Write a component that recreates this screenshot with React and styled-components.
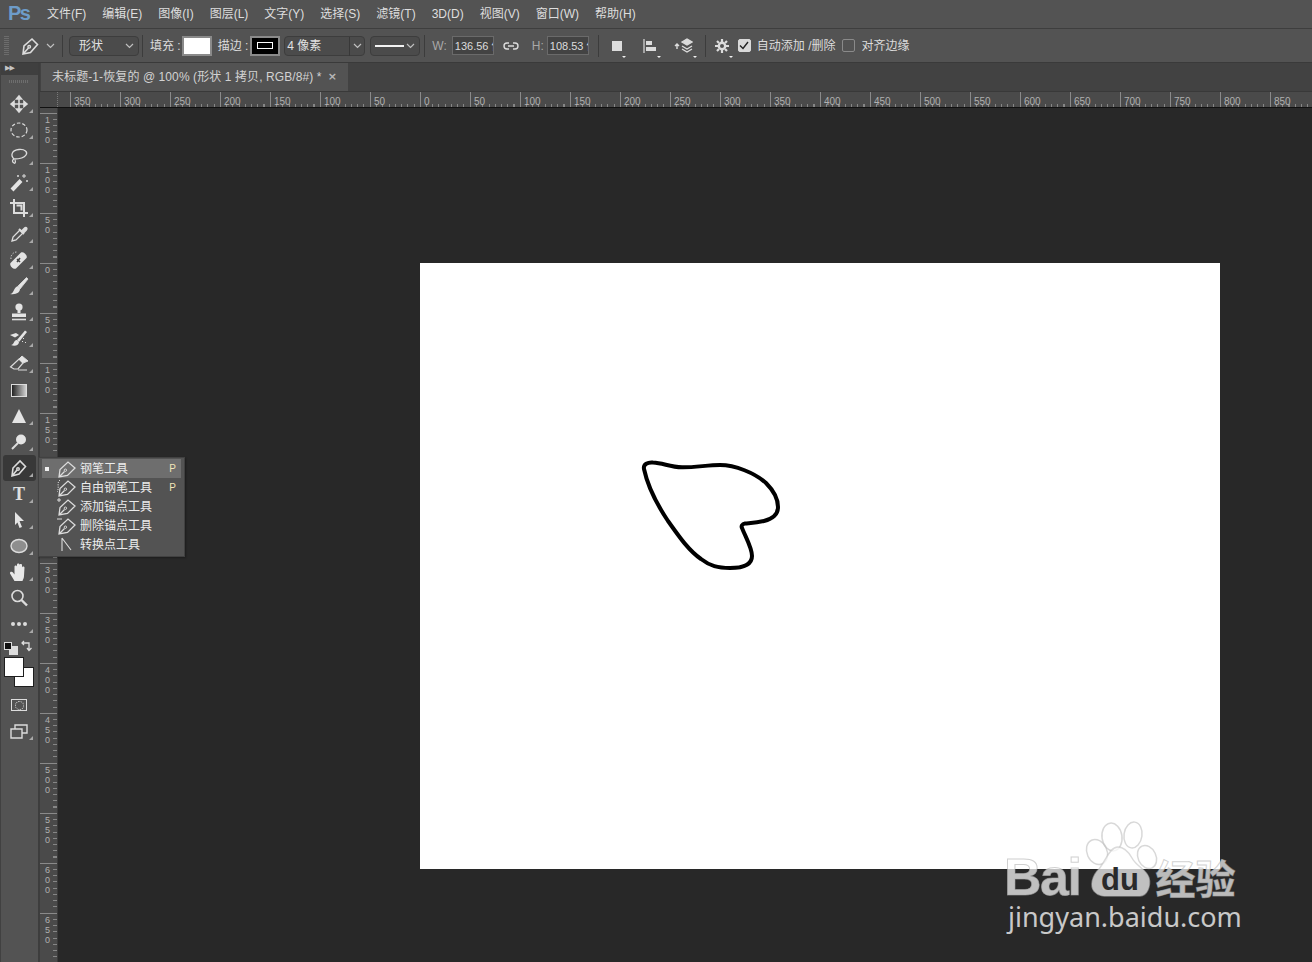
import React from 'react';
import styled, { createGlobalStyle } from 'styled-components';

const GlobalStyle = createGlobalStyle`
  html, body { margin: 0; padding: 0; background: #282828; }
  * { box-sizing: border-box; }
`;

const CJK = `"Liberation Sans", "Noto Sans CJK SC", sans-serif`;

const Shell = styled.div`
  position: relative;
  width: 1312px;
  height: 962px;
  overflow: hidden;
  display: flex;
  flex-direction: column;
  background: #535353;
  color: #e2e2e2;
  font: 12px/16px ${CJK};
`;

/* menu bar */
const MenuBar = styled.div`
  height: 29px;
  flex: none;
  display: flex;
  align-items: center;
  padding-left: 8px;
  gap: 16px;
  background: #535353;
  border-bottom: 1px solid #3e3e3e;
`;
const Logo = styled.div`
  width: 23px;
  margin-top: -3px;
  color: #6d9cc9;
  font: bold 20px/22px "Liberation Sans", sans-serif;
  letter-spacing: -1.5px;
`;
const MenuItem = styled.span`
  color: #dedede;
  white-space: nowrap;
`;

/* options bar */
const OptionsBar = styled.div`
  height: 34px;
  flex: none;
  display: flex;
  align-items: center;
  background: #535353;
  border-bottom: 1px solid #3a3a3a;
`;
const Grip = styled.div`
  width: 5px;
  height: 20px;
  margin: 0 12px 0 4px;
  background: repeating-linear-gradient(180deg, #6c6c6c 0 1px, transparent 1px 2px);
`;
const Divider = styled.div`
  width: 1px;
  height: 22px;
  flex: none;
  margin: ${p => p.$margin || '0 6px'};
  background: #3c3c3c;
`;
const Caret = styled.svg`
  width: 9px;
  height: 6px;
  flex: none;
  fill: none;
  stroke: #c0c0c0;
  stroke-width: 1.2;
`;
const Select = styled.div`
  width: ${p => p.$width}px;
  height: 20px;
  flex: none;
  display: flex;
  align-items: center;
  justify-content: space-between;
  padding: 1px 4px 0 9px;
  background: #4b4b4b;
  border: 1px solid #3d3d3d;
  border-radius: 4px;
`;
const OptLabel = styled.span`
  flex: none;
  white-space: nowrap;
  padding-top: 1px;
  color: ${p => p.$dim ? '#a8a8a8' : '#dcdcdc'};
  margin: ${p => p.$margin || '0'};
`;
const Swatch = styled.div`
  width: 30px;
  height: 20px;
  flex: none;
  display: flex;
  align-items: center;
  justify-content: center;
  border: 2px solid #8a8a8a;
  background: ${p => p.$bg};
`;
const StrokeBox = styled.div`
  width: 16px;
  height: 7px;
  border: 1.5px solid #fff;
`;
const SizeField = styled.div`
  width: 81px;
  height: 20px;
  flex: none;
  display: grid;
  grid-template-columns: 65px 1fr;
  align-items: center;
  margin-left: 4px;
  background: #4b4b4b;
  border: 1px solid #3d3d3d;
  border-radius: 4px;
`;
const SizeValue = styled.span`
  padding-left: 2px;
  height: 100%;
  line-height: 19px;
  border-right: 1px solid #383838;
`;
const CaretCell = styled.span`
  display: flex;
  justify-content: center;
`;
const LineSelect = styled(Select)`
  margin-left: 5px;
  padding: 0 4px;
`;
const LineSample = styled.span`
  width: 29px;
  height: 2px;
  background: #f2f2f2;
`;
const NumField = styled.div`
  width: 42px;
  height: 19px;
  flex: none;
  padding-left: 2px;
  overflow: hidden;
  white-space: nowrap;
  line-height: 18px;
  font-size: 11px;
  color: #dcdcdc;
  background: #434343;
  border: 1px solid #6a6a6a;
`;
const OptIcon = styled.span`
  position: relative;
  width: ${p => p.$width}px;
  height: 20px;
  flex: none;
  display: flex;
  align-items: center;
  margin: ${p => p.$margin || '0'};
  &::after {
    content: "";
    position: absolute;
    right: -4px;
    bottom: -4px;
    border: 2.5px solid transparent;
    border-top-color: #f0f0f0;
    display: ${p => p.$menu ? 'block' : 'none'};
  }
`;
const FillSquare = styled.span`
  width: 10px;
  height: 10px;
  background: #dcdcdc;
`;
const Check = styled.span`
  width: 13px;
  height: 13px;
  flex: none;
  display: flex;
  align-items: center;
  justify-content: center;
  border-radius: 2px;
  background: ${p => p.$on ? '#d9d9d9' : 'transparent'};
  border: 1px solid ${p => p.$on ? '#d9d9d9' : '#8a8a8a'};
  margin: ${p => p.$margin || '0'};
`;

/* workspace */
const Workspace = styled.div`
  flex: 1;
  min-height: 0;
  display: flex;
`;
const Toolbar = styled.div`
  width: 40px;
  flex: none;
  display: flex;
  flex-direction: column;
  background: #535353;
  border-right: 2px solid #3d3d3d;
  border-left: 1px solid #414141;
`;
const CollapseStrip = styled.div`
  height: 12px;
  padding-left: 4px;
  color: #c4c4c4;
  font: 7px/10px "DejaVu Sans", sans-serif;
  letter-spacing: -1px;
  background: #3f3f3f;
`;
const ToolGrip = styled.div`
  height: 16px;
  display: flex;
  justify-content: center;
  padding: 5px 2px 0 0;
  &::before {
    content: "";
    width: 20px;
    height: 3px;
    background: repeating-linear-gradient(90deg, #6e6e6e 0 1px, transparent 1px 2px);
  }
`;
const Tool = styled.div`
  position: relative;
  width: 33px;
  height: 26px;
  margin-left: 2px;
  padding-right: 1px;
  flex: none;
  display: flex;
  align-items: center;
  justify-content: center;
  border-radius: 3px;
  background: ${p => p.$active ? '#383838' : 'transparent'};
  &::after {
    content: "";
    position: absolute;
    right: 3px;
    bottom: 4px;
    border-style: solid;
    border-width: 0 0 4px 4px;
    border-color: transparent transparent #a8a8a8 transparent;
    display: ${p => p.$corner === false ? 'none' : 'block'};
  }
`;
const ColorWell = styled.div`
  position: relative;
  height: 55px;
  flex: none;
`;
const MiniSwatch = styled.div`
  position: absolute;
  left: ${p => p.$left}px;
  top: ${p => p.$top}px;
  width: ${p => p.$size}px;
  height: ${p => p.$size}px;
  background: ${p => p.$bg};
  border: 1px solid ${p => p.$edge || '#1e1e1e'};
`;
const SwapIcon = styled.svg`
  position: absolute;
  left: 20px;
  top: 3px;
  width: 12px;
  height: 12px;
  fill: none;
  stroke: #dcdcdc;
  stroke-width: 1.3;
`;

/* document area */
const Main = styled.div`
  flex: 1;
  min-width: 0;
  display: flex;
  flex-direction: column;
`;
const TabBar = styled.div`
  height: 29px;
  flex: none;
  display: flex;
  background: #424242;
  border-bottom: 1px solid #393939;
`;
const Tab = styled.div`
  width: 307px;
  margin-left: 1px;
  display: flex;
  align-items: center;
  justify-content: space-between;
  padding: 0 11px;
  color: #d2d2d2;
  letter-spacing: .09px;
  background: #535353;
`;
const TabClose = styled.span`
  color: #b8b8b8;
  font: bold 11px/12px "DejaVu Sans", sans-serif;
`;
const RulerRow = styled.div`
  height: 16px;
  flex: none;
  display: flex;
  background: #4a4a4a;
  border-bottom: 1px solid #111;
`;
const RulerCorner = styled.div`
  width: 18px;
  flex: none;
  background: #484848;
  border-right: 1px dotted #7a7a7a;
`;
const Stub = styled.div`
  width: ${p => p.$size}px;
  flex: none;
`;
const HMark = styled.div`
  width: 50px;
  height: 15px;
  flex: none;
  padding: 3px 0 0 3px;
  color: #b0b0b0;
  font: 10px/13px "Liberation Sans", sans-serif;
  border-left: 1px solid #8a8a8a;
  background: repeating-linear-gradient(90deg, #868686 0 1px, transparent 1px 6.25px) 5px 100% / 100% 3px no-repeat;
`;
const CanvasRow = styled.div`
  flex: 1;
  min-height: 0;
  display: flex;
`;
const VRuler = styled.div`
  width: 18px;
  flex: none;
  overflow: hidden;
  background: #4a4a4a;
  border-right: 1px solid #3a3a3a;
`;
const VStub = styled.div`
  height: 5px;
`;
const VMark = styled.div`
  width: 100%;
  height: 50px;
  padding: 1px 0 0 5px;
  color: #b0b0b0;
  font: 9px/10px "Liberation Sans", sans-serif;
  border-top: 1px solid #8a8a8a;
  background: repeating-linear-gradient(180deg, #868686 0 1px, transparent 1px 6.25px) 100% 5px / 4px 100% no-repeat;
`;
const Digit = styled.div`
  height: 10px;
`;
const Canvas = styled.div`
  flex: 1;
  min-width: 0;
  background: #282828;
  padding: 155px 0 0 362px;
`;
const Doc = styled.svg`
  display: block;
  width: 800px;
  height: 606px;
  background: #fff;
`;

/* flyout menu */
const Flyout = styled.div`
  position: absolute;
  left: 38px;
  top: 457px;
  width: 147px;
  height: 100px;
  padding: 1px 3px;
  background: #535353;
  border: 1px solid #414141;
  box-shadow: 1px 1px 2px rgba(0, 0, 0, .3);
`;
const FlyRow = styled.div`
  position: relative;
  height: 19px;
  display: flex;
  align-items: center;
  color: #ececec;
  background: ${p => p.$active ? '#6e6e6e' : 'transparent'};
`;
const FlyDot = styled.span`
  width: 4px;
  height: 4px;
  flex: none;
  margin: 0 7px 0 3px;
  background: ${p => p.$on ? '#f0f0f0' : 'transparent'};
`;
const FlyIcon = styled.span`
  width: 22px;
  height: 18px;
  flex: none;
  margin-right: 2px;
  display: flex;
  align-items: center;
  justify-content: center;
`;
const FlyKey = styled.span`
  margin-left: auto;
  margin-right: 5px;
  color: #f2e6b8;
  font: 10px/12px "Liberation Sans", sans-serif;
`;

/* watermark */
const Watermark = styled.div`
  position: absolute;
  left: 1006px;
  top: 820px;
  width: 240px;
  height: 116px;
  pointer-events: none;
`;
const WaterRow = styled.div`
  display: flex;
  align-items: center;
  height: 78px;
  padding-top: 36px;
  color: rgba(255, 255, 255, .71);
  -webkit-text-stroke: 1px rgba(170, 170, 170, .55);
`;
const BaiText = styled.span`
  margin-left: -2px;
  font: bold 52px/40px "Liberation Sans", sans-serif;
  letter-spacing: -1.5px;
`;
const Paw = styled.svg`
  position: absolute;
  left: 0;
  top: 0;
  width: 240px;
  height: 80px;
`;
const DuText = styled.span`
  position: relative;
  width: 57px;
  margin: 5px 0 0 11px;
  text-align: center;
  color: #2a2a2a;
  -webkit-text-stroke: 0;
  font: bold 31px/32px "Liberation Sans", sans-serif;
`;
const JingText = styled.span`
  margin-left: 7px;
  font: bold 40px/40px "Noto Sans CJK SC", sans-serif;
`;
const WaterUrl = styled.div`
  margin: 5px 0 0 2px;
  color: rgba(255, 255, 255, .75);
  font: 27px/28px "Noto Sans", sans-serif;
  white-space: nowrap;
`;

/* drawings */
const Ico = styled.svg`
  display: block;
  fill: none;
  stroke: #dcdcdc;
  stroke-width: 1.4;
`;

const PenNib = ({ size = 18, color = '#dcdcdc' }) => (
  <Ico width={size} height={size} viewBox="0 0 18 18" style={{ stroke: color }}>
    <path d="M2 17 L3 9 L11 2 L16.5 7.5 L9.5 15.5 Z M2 17 L7.5 11" strokeWidth="1.6" />
    <circle cx="8.2" cy="9.8" r="1.3" />
  </Ico>
);

const DownCaret = () => (
  <Caret viewBox="0 0 9 6"><path d="M1 1 L4.5 4.5 L8 1" /></Caret>
);

const toolIcons = {
  move: <path d="M10 2 V18 M2 10 H18 M10 2 L7.5 5 H12.5 Z M10 18 L7.5 15 H12.5 Z M2 10 L5 7.5 V12.5 Z M18 10 L15 7.5 V12.5 Z" fill="#dcdcdc" strokeWidth="1.6" />,
  marquee: <ellipse cx="10" cy="10" rx="8" ry="7" strokeDasharray="3.5 2" strokeWidth="1.2" />,
  lasso: <path d="M5 13 C1 9 3 4 10 3.5 C16 3 19 6 17 9 C15 12 9 13 5 13 C3 14 3 16 5 17 C6 18 7 16 6 14" strokeWidth="1.3" />,
  wand: <g><path d="M3 18 L12 8.5" strokeWidth="4" stroke="#e4e4e4" /><path d="M15 2 V6 M13 4 H17 M18 8 V10 M17 9 H19 M9 3 V5 M8 4 H10" strokeWidth="1" /></g>,
  crop: <path d="M1 5 H15 V19 M5 1 V15 H19 M7.5 7.5 H12.5 V12.5" strokeWidth="2" />,
  dropper: <g><path d="M3 17 L4 13 L11 6 L14 9 L7 16 Z" strokeWidth="1.3" /><path d="M10 5 L15 10 M13 7 L16 4 C17 3 18.5 4.5 17 6 L14 9" fill="#e0e0e0" strokeWidth="2" /></g>,
  heal: <g><path d="M1.5 13 L12 2.5 C14.5 1 19 5.5 17.5 8 L7 18.5 C4.5 20 0 15.5 1.5 13 Z" fill="#e4e4e4" stroke="none" /><path d="M8 9 L11 12 M11 8 L8 12" stroke="#444" strokeWidth="1.6" /><path d="M2 9 A6 6 0 0 1 8 2" strokeDasharray="1.4 1.4" strokeWidth="1" /></g>,
  brush: <g><path d="M9 10 L17.5 1.5 L19 3 L11 13 Z" fill="#e4e4e4" strokeWidth=".8" /><path d="M1 18 C5 18 4.5 11 9 10 L11 13 C11 16.5 7 19 1 18 Z" fill="#e4e4e4" stroke="none" /></g>,
  stamp: <g><circle cx="10" cy="5" r="3.6" fill="#e4e4e4" stroke="none" /><path d="M10 7 V11" strokeWidth="3" stroke="#e4e4e4" /><path d="M3 11.5 H17 V15 H3 Z" fill="#e4e4e4" stroke="none" /><path d="M3 17.5 H17" strokeWidth="1.6" /></g>,
  history: <g><path d="M8 12 L16 2.5 L18 4 L10 14 Z" fill="#e4e4e4" stroke="none" /><path d="M2 17 C5 17 5 11.5 8 12 L10 14 C10 17 6 19 2 17 Z" fill="#e4e4e4" stroke="none" /><path d="M1 7 L7 5 L10 7 L6 9.5 Z" fill="#e4e4e4" stroke="none" /><path d="M14 10 L15 11 M13 13 L14 14 M16 14 L17 15" strokeWidth="1" /></g>,
  eraser: <g><path d="M1.5 13 L10 5 L14 9 L9 15 H5 Z" strokeWidth="1.2" /><path d="M10 5 L13 2 L19 7 L14 9 Z" fill="#e4e4e4" strokeWidth="1" /><path d="M9 16 H18" strokeWidth="1" /></g>,
  sharpen: <path d="M10 3 L17 17 H3 Z" fill="#e4e4e4" stroke="none" />,
  dodge: <g><circle cx="12" cy="7.5" r="5" fill="#e4e4e4" stroke="none" /><path d="M9 11 L3 17" strokeWidth="2" /></g>,
  pen: <g><path d="M3 18 L4 10 L11 3 L16.5 8.5 L10 16 Z M3 18 L8 12" strokeWidth="1.6" /><circle cx="9" cy="11" r="1.3" /></g>,
  pathSelect: <path d="M6 2 L15 11 H10.5 L13 17 L10.5 18 L8.5 12.5 L6 15 Z" fill="#e4e4e4" stroke="none" />,
  ellipse: <ellipse cx="10" cy="10" rx="8" ry="6.5" fill="#8e8e8e" stroke="#dcdcdc" strokeWidth="1.4" />,
  hand: <path d="M5.5 19 L1 11.5 C0.5 9.5 3 9 4 10.5 L5.5 12.5 V4.5 C5.5 3 8 3 8 4.5 V10 V2.5 C8 1 10.5 1 10.5 2.5 V10 V3 C10.5 1.6 13 1.6 13 3 V10.5 V5.5 C13 4 15.5 4 15.5 5.5 L15 14 C15 16 14 17.5 13.5 19 Z" fill="#e8e8e8" stroke="none" />,
  zoom: <g><circle cx="8.5" cy="8" r="5.5" strokeWidth="1.6" /><path d="M12.5 12 L18 17.5" strokeWidth="2.4" /></g>,
  dots: <g fill="#dcdcdc" stroke="none"><circle cx="4" cy="10" r="2" /><circle cx="10" cy="10" r="2" /><circle cx="16" cy="10" r="2" /></g>,
  screens: <g strokeWidth="1.4"><path d="M6 4 H18 V12 H6 Z" /><path d="M2 8 H13 V17 H2 Z" fill="#535353" /></g>,
};

const TypeGlyph = styled.span`
  color: #e0e0e0;
  font: bold 18px/20px "Liberation Serif", serif;
`;
const GradientChip = styled.div`
  width: 16px;
  height: 13px;
  border: 1px solid #dcdcdc;
  background: linear-gradient(90deg, #222, #d0d0d0);
`;
const MaskChip = styled.div`
  width: 16px;
  height: 12px;
  display: flex;
  align-items: center;
  justify-content: center;
  border: 1px solid #dcdcdc;
  &::before {
    content: "";
    width: 7px;
    height: 7px;
    border-radius: 50%;
    border: 1px dotted #dcdcdc;
  }
`;

const ToolIcon = ({ name }) => (
  <Ico width="20" height="20" viewBox="0 0 20 20">{toolIcons[name]}</Ico>
);

const menus = ['文件(F)', '编辑(E)', '图像(I)', '图层(L)', '文字(Y)', '选择(S)', '滤镜(T)', '3D(D)', '视图(V)', '窗口(W)', '帮助(H)'];
const upperTools = ['move', 'marquee', 'lasso', 'wand', 'crop', 'dropper', 'heal', 'brush', 'stamp', 'history', 'eraser'];
const lowerTools = ['sharpen', 'dodge'];
const hLabels = [350, 300, 250, 200, 150, 100, 50, 0, 50, 100, 150, 200, 250, 300, 350, 400, 450, 500, 550, 600, 650, 700, 750, 800, 850];
const vLabels = [150, 100, 50, 0, 50, 100, 150, 200, 250, 300, 350, 400, 450, 500, 550, 600, 650];

const flyItems = [
  { label: '钢笔工具', key: 'P', active: true, mark: null },
  { label: '自由钢笔工具', key: 'P', mark: 'free' },
  { label: '添加锚点工具', mark: 'add' },
  { label: '删除锚点工具', mark: 'del' },
  { label: '转换点工具', mark: 'convert' },
];

const FlyGlyph = ({ mark }) => {
  if (mark === 'convert') {
    return <Ico width="20" height="18" viewBox="0 0 20 18"><path d="M5 2 V15 M5 2 L14 14" strokeWidth="1.1" /></Ico>;
  }
  return (
    <Ico width="20" height="18" viewBox="0 0 20 18">
      <path d="M2 17 L3 9.5 L11 2 L18 8 L10.5 15.5 Z M2 17 L7.5 11.5" strokeWidth="1.3" />
      <circle cx="8.4" cy="10.2" r="1.2" strokeWidth="1" />
      {mark === 'add' && <path d="M0 2 H4 M2 0 V4" strokeWidth="1" />}
      {mark === 'del' && <path d="M0 2 H5" strokeWidth="1" />}
      {mark === 'free' && <path d="M3 1 C-1 4 3 8 0 13" strokeWidth="1" strokeDasharray="1.2 1.2" />}
    </Ico>
  );
};

export default function App() {
  return (
    <>
      <GlobalStyle />
      <Shell>
        <MenuBar>
          <Logo>Ps</Logo>
          {menus.map(m => <MenuItem key={m}>{m}</MenuItem>)}
        </MenuBar>

        <OptionsBar>
          <Grip />
          <PenNib />
          <OptIcon $width={9} $margin="0 0 0 7px"><DownCaret /></OptIcon>
          <Divider $margin="0 6px 0 7px" />
          <Select $width={70}>形状<DownCaret /></Select>
          <Divider $margin="0 7px 0 3px" />
          <OptLabel>填充 :</OptLabel>
          <OptIcon $width={1} />
          <Swatch $bg="#fff" />
          <OptLabel $margin="0 2px 0 6px">描边 :</OptLabel>
          <Swatch $bg="#000"><StrokeBox /></Swatch>
          <SizeField>
            <SizeValue>4 像素</SizeValue>
            <CaretCell><DownCaret /></CaretCell>
          </SizeField>
          <LineSelect $width={50}><LineSample /><DownCaret /></LineSelect>
          <Divider $margin="0 7px 0 4px" />
          <OptLabel $dim $margin="0 5px 0 0">W:</OptLabel>
          <NumField>136.56 像素</NumField>
          <OptIcon $width={16} $margin="0 13px 0 9px">
            <Ico width="16" height="10" viewBox="0 0 16 10" strokeWidth="1.2"><path d="M6 2 H4 A3 3 0 0 0 4 8 H6 M10 2 H12 A3 3 0 0 1 12 8 H10 M5 5 H11" /></Ico>
          </OptIcon>
          <OptLabel $dim $margin="0 3px 0 0">H:</OptLabel>
          <NumField>108.53 像素</NumField>
          <Divider $margin="0 13px 0 9px" />
          <OptIcon $width={10} $menu><FillSquare /></OptIcon>
          <OptIcon $width={14} $menu $margin="0 0 0 21px">
            <Ico width="14" height="16" viewBox="0 0 14 16"><path d="M1 1 V15" strokeWidth="1.2" /><path d="M3 3 H9 V7 H3 Z M3 9 H13 V13 H3 Z" fill="#dcdcdc" stroke="none" /></Ico>
          </OptIcon>
          <OptIcon $width={19} $menu $margin="0 0 0 17px">
            <Ico width="19" height="18" viewBox="0 0 19 18" strokeWidth="1"><path d="M1 9 L3 7 L5 9 M3 7 V12" /><path d="M8 5 L13 2 L18 5 L13 8 Z" fill="#dcdcdc" /><path d="M8 9 L13 12 L18 9 M8 12 L13 15 L18 12" /></Ico>
          </OptIcon>
          <Divider $margin="0 9px 0 12px" />
          <OptIcon $width={14} $menu>
            <Ico width="14" height="14" viewBox="0 0 14 14"><circle cx="7" cy="7" r="3.2" strokeWidth="2.4" /><path d="M7 0 V3 M7 11 V14 M0 7 H3 M11 7 H14 M2 2 L4 4 M10 10 L12 12 M12 2 L10 4 M4 10 L2 12" strokeWidth="2.2" /></Ico>
          </OptIcon>
          <Check $on $margin="0 0 0 9px">
            <Ico width="10" height="9" viewBox="0 0 10 9" style={{ stroke: '#222' }} strokeWidth="1.8"><path d="M1 4.5 L4 7.5 L9 1" /></Ico>
          </Check>
          <OptLabel $margin="0 0 0 6px">自动添加 /删除</OptLabel>
          <Check $margin="0 0 0 7px" />
          <OptLabel $margin="0 0 0 6px">对齐边缘</OptLabel>
        </OptionsBar>

        <Workspace>
          <Toolbar>
            <CollapseStrip>▶▶</CollapseStrip>
            <ToolGrip />
            {upperTools.map(t => <Tool key={t}><ToolIcon name={t} /></Tool>)}
            <Tool $corner={false}><GradientChip /></Tool>
            {lowerTools.map(t => <Tool key={t}><ToolIcon name={t} /></Tool>)}
            <Tool $active><ToolIcon name="pen" /></Tool>
            <Tool><TypeGlyph>T</TypeGlyph></Tool>
            <Tool><ToolIcon name="pathSelect" /></Tool>
            <Tool><ToolIcon name="ellipse" /></Tool>
            <Tool><ToolIcon name="hand" /></Tool>
            <Tool $corner={false}><ToolIcon name="zoom" /></Tool>
            <Tool><ToolIcon name="dots" /></Tool>
            <ColorWell>
              <MiniSwatch $left={8} $top={9} $size={9} $bg="#dcdcdc" $edge="#dcdcdc" />
              <MiniSwatch $left={3} $top={5} $size={8} $bg="#111" $edge="#ddd" />
              <SwapIcon viewBox="0 0 12 12"><path d="M1 3 H8 V10 M6 8 L8 10.5 L10.5 8 M3 1 L1 3 L3 5" /></SwapIcon>
              <MiniSwatch $left={13} $top={30} $size={20} $bg="#fff" />
              <MiniSwatch $left={3} $top={20} $size={20} $bg="#fff" />
            </ColorWell>
            <Tool $corner={false}><MaskChip /></Tool>
            <Tool><ToolIcon name="screens" /></Tool>
          </Toolbar>

          <Main>
            <TabBar>
              <Tab>
                未标题-1-恢复的 @ 100% (形状 1 拷贝, RGB/8#) *
                <TabClose>×</TabClose>
              </Tab>
            </TabBar>
            <RulerRow>
              <RulerCorner />
              <Stub $size={12} />
              {hLabels.map((n, i) => <HMark key={i}>{n}</HMark>)}
            </RulerRow>
            <CanvasRow>
              <VRuler>
                <VStub />
                {vLabels.map((n, i) => (
                  <VMark key={i}>
                    {String(n).split('').map((d, j) => <Digit key={j}>{d}</Digit>)}
                  </VMark>
                ))}
              </VRuler>
              <Canvas>
                <Doc viewBox="0 0 800 606">
                  <path
                    d="M224,206 C223,201 228,199 233,199.5 C243,200 250,204 262,204.3 C275,204.5 288,202 300,202 C315,202 335,210 346,220 C354,228 358,236 358,244 C358,252 352,256 344,258 C336,260 330,260 325,260.5 C322,261 321,263 322,265 C326,275 332,285 332,293 C332,302 322,305 310,305 C298,305 290,303 281,296 C268,287 258,272 248,258 C238,243 228,225 224,206 Z"
                    fill="none"
                    stroke="#000"
                    strokeWidth="4"
                  />
                </Doc>
              </Canvas>
            </CanvasRow>
          </Main>
        </Workspace>

        <Flyout>
          {flyItems.map(it => (
            <FlyRow key={it.label} $active={it.active}>
              <FlyDot $on={it.active} />
              <FlyIcon><FlyGlyph mark={it.mark} /></FlyIcon>
              {it.label}
              {it.key && <FlyKey>{it.key}</FlyKey>}
            </FlyRow>
          ))}
        </Flyout>

        <Watermark>
          <Paw viewBox="0 0 240 80">
            <g fill="rgba(255,255,255,.2)" stroke="rgba(190,190,190,.6)" strokeWidth="1.5">
              <ellipse cx="91" cy="32" rx="10" ry="13" transform="rotate(-25 91 32)" />
              <ellipse cx="106" cy="17" rx="10" ry="14" transform="rotate(-8 106 17)" />
              <ellipse cx="127" cy="15" rx="9" ry="13" transform="rotate(8 127 15)" />
              <ellipse cx="141" cy="37" rx="9" ry="12" transform="rotate(-25 141 37)" />
            </g>
            <path d="M112,27 C104,27 100,40 93,49 C86,56 84,66 88,71 C93,77 100,76 107,76 H134 C141,76 145,66 143,58 C141,50 130,46 126,38 C122,31 118,27 112,27 Z" fill="rgba(255,255,255,.71)" stroke="rgba(190,190,190,.55)" strokeWidth="1.5" />
          </Paw>
          <WaterRow>
            <BaiText>Bai</BaiText>
            <DuText>du</DuText>
            <JingText>经验</JingText>
          </WaterRow>
          <WaterUrl>jingyan.baidu.com</WaterUrl>
        </Watermark>
      </Shell>
    </>
  );
}
